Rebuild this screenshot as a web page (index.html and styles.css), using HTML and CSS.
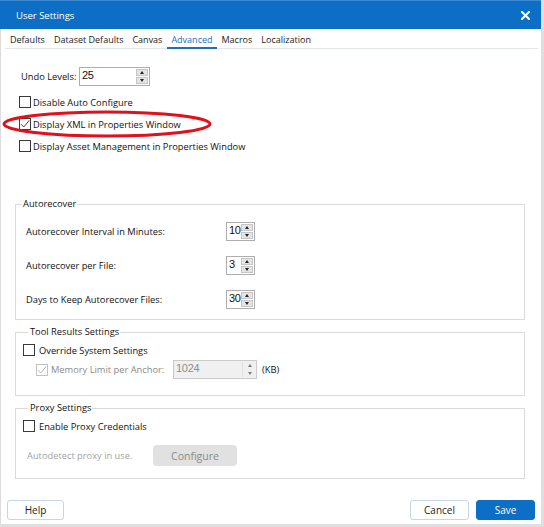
FILE: index.html
```html
<!DOCTYPE html>
<html>
<head>
<meta charset="utf-8">
<link rel="stylesheet" href="styles.css">
</head>
<body>
<div class="dialog">
  <div class="titlebar">
    <span class="title">User Settings</span>
    <svg class="close" width="9" height="9" viewBox="0 0 9 9"><path d="M1 1L8 8M8 1L1 8" stroke="#fff" stroke-width="2" stroke-linecap="square"/></svg>
  </div>
  <div class="tabs">
    <span class="tab">Defaults</span>
    <span class="tab">Dataset Defaults</span>
    <span class="tab">Canvas</span>
    <span class="tab active">Advanced</span>
    <span class="tab">Macros</span>
    <span class="tab">Localization</span>
  </div>
  <div class="content">
    <div class="undo-row">
      <span class="undo-label">Undo Levels:</span>
      <div class="spin spin-undo">
        <span class="spin-val">25</span>
        <span class="spin-btns"><span class="sb up"></span><span class="sb down"></span></span>
      </div>
    </div>
    <div class="check-row first"><span class="cb"></span><span>Disable Auto Configure</span></div>
    <div class="check-row"><span class="cb"><svg width="10" height="10" viewBox="0 0 10 10"><path d="M1 5.2L3.8 8L9.2 1.4" fill="none" stroke="#444" stroke-width="1"/></svg></span><span>Display XML in Properties Window</span></div>
    <div class="check-row"><span class="cb"></span><span>Display Asset Management in Properties Window</span></div>

    <fieldset class="group group-auto">
      <legend>Autorecover</legend>
      <div class="auto-grid">
        <span>Autorecover Interval in Minutes:</span>
        <div class="spin spin-small"><span class="spin-val">10</span><span class="spin-btns"><span class="sb up"></span><span class="sb down"></span></span></div>
        <span>Autorecover per File:</span>
        <div class="spin spin-small"><span class="spin-val">3</span><span class="spin-btns"><span class="sb up"></span><span class="sb down"></span></span></div>
        <span>Days to Keep Autorecover Files:</span>
        <div class="spin spin-small"><span class="spin-val">30</span><span class="spin-btns"><span class="sb up"></span><span class="sb down"></span></span></div>
      </div>
    </fieldset>

    <fieldset class="group group-tool">
      <legend>Tool Results Settings</legend>
      <div class="grp-row"><span class="cb"></span><span>Override System Settings</span></div>
      <div class="mem-row">
        <span class="cb cb-disabled"><svg width="10" height="10" viewBox="0 0 10 10"><path d="M1 5.2L3.8 8L9.2 1.4" fill="none" stroke="#b4b4b4" stroke-width="1"/></svg></span>
        <span class="mem-label">Memory Limit per Anchor:</span>
        <div class="spin spin-mem disabled">
          <span class="spin-val">1024</span>
          <span class="spin-btns"><span class="sb up"></span><span class="sb down"></span></span>
        </div>
        <span class="kb">(KB)</span>
      </div>
    </fieldset>

    <fieldset class="group group-proxy">
      <legend>Proxy Settings</legend>
      <div class="grp-row"><span class="cb"></span><span>Enable Proxy Credentials</span></div>
      <div class="proxy-row">
        <span class="autodetect">Autodetect proxy in use.</span>
        <span class="configure">Configure</span>
      </div>
    </fieldset>
  </div>
  <div class="footer">
    <span class="btn btn-help">Help</span>
    <span class="btn btn-cancel">Cancel</span>
    <span class="btn btn-save">Save</span>
  </div>
  <svg class="annot" width="214" height="30" viewBox="0 0 214 30"><ellipse cx="106" cy="14" rx="103" ry="12" fill="none" stroke="#e0101c" stroke-width="3"/></svg>
</div>
</body>
</html>
```
FILE: styles.css
```css
* { box-sizing: border-box; }
html, body { margin: 0; padding: 0; }
body {
  width: 544px;
  height: 527px;
  overflow: hidden;
  background: #dfdfdf;
  font-family: "Open Sans", "Noto Sans", sans-serif;
  font-size: 9.3px;
  color: #111;
}
.dialog {
  position: relative;
  width: 541px;
  height: 524px;
  background: #fff;
  display: flex;
  flex-direction: column;
  box-shadow: inset 1px 0 0 #dcdcdc;
}
.titlebar {
  height: 29px;
  flex: none;
  background: #0c6fc5;
  color: #fff;
  display: flex;
  align-items: center;
  justify-content: space-between;
  padding: 0 11px 0 16px;
  border-top: 1px solid #3d8ad0;
}
.title { font-size: 9.5px; }
.close { display: block; }

.tabs {
  flex: none;
  margin: 0 3px 0 5px;
  height: 20px;
  display: flex;
  border-bottom: 1px solid #e2e7ee;
  font-size: 9px;
}
.tab {
  padding: 4px 4.5px 0;
  line-height: 14px;
  height: 19px;
  color: #222;
}
.tab:first-child { padding-left: 5px; }
.tab.active {
  color: #1f6fc0;
  height: 20px;
  margin-bottom: -1px;
  border-bottom: 2px solid #1f6fc0;
}

.content {
  flex: 1;
  display: flex;
  flex-direction: column;
  padding: 0 16px 0 15px;
}
.undo-row {
  margin-top: 18px;
  height: 19px;
  display: flex;
  align-items: center;
  padding-left: 6px;
}
.undo-label { width: 58px; }

.check-row {
  height: 22px;
  display: flex;
  align-items: center;
  gap: 2px;
  padding-left: 4px;
}
.check-row.first { margin-top: 5px; }

.cb {
  width: 12px;
  height: 12px;
  flex: none;
  border: 1px solid #3a3a3a;
  background: #fff;
  display: flex;
  align-items: center;
  justify-content: center;
}
.cb svg { display: block; }
.cb-disabled { border-color: #c2c2c2; }

.spin {
  height: 19px;
  display: flex;
  justify-content: space-between;
  border: 1px solid #aeaeae;
  background: #fff;
  padding: 1px 1px 1px 2px;
  flex: none;
}
.spin-undo { width: 71px; }
.spin-small { width: 29px; }
.spin-mem { width: 84px; }
.spin-val {
  font-family: "Liberation Sans", Arial, sans-serif;
  font-size: 11px;
  line-height: 12px;
  color: #111;
  letter-spacing: -0.3px;
}
.spin-btns {
  width: 12px;
  display: flex;
  flex-direction: column;
  gap: 1px;
}
.sb {
  flex: 1;
  background: #e4e4e4;
  border: 1px solid #c6c6c6;
  display: flex;
  align-items: center;
  justify-content: center;
}
.sb::after {
  content: "";
  width: 0;
  height: 0;
  border-left: 2.5px solid transparent;
  border-right: 2.5px solid transparent;
}
.sb.up::after { border-bottom: 3px solid #222; }
.sb.down::after { border-top: 3px solid #222; }

.spin.disabled {
  background: #f0f0f0;
  border-color: #cbcbcb;
}
.spin.disabled .spin-val { color: #8e8e8e; }
.spin.disabled .spin-btns { width: 13px; padding-left: 1px; border-left: 1px solid #e2e2e2; }
.spin.disabled .sb { background: transparent; border: none; }
.spin.disabled .sb.up::after { border-bottom-color: #7c7c7c; }
.spin.disabled .sb.down::after { border-top-color: #7c7c7c; }

.group {
  margin: 5px 0 0;
  padding: 0;
  border: 1px solid #dadada;
  min-width: 0;
}
.group legend {
  margin-left: 5px;
  padding: 0 1px 0 2px;
  line-height: 14px;
}
.group-auto { margin-top: 40px; }
.auto-grid {
  display: grid;
  grid-template-columns: 200px 29px;
  row-gap: 15px;
  align-items: center;
  padding: 11px 0 10px 10px;
}
.group-tool { padding: 2px 0 16px 7px; }
.group-proxy { padding: 2px 0 12px 7px; }
.grp-row {
  height: 18px;
  display: flex;
  align-items: center;
  gap: 4px;
}
.mem-row {
  margin-top: 1px;
  height: 19px;
  display: flex;
  align-items: center;
  padding-left: 13px;
}
.mem-row .cb { margin-right: 3px; }
.mem-label { width: 122px; color: #8a8a8a; }
.kb { margin-left: 5px; }
.proxy-row {
  margin-top: 10px;
  display: flex;
  align-items: center;
  padding-left: 4px;
}
.autodetect { width: 126px; color: #a3a3a3; }
.configure {
  width: 84px;
  height: 21px;
  border-radius: 4px;
  background: #e1e1e1;
  color: #8a8a8a;
  font-size: 10.5px;
  display: flex;
  align-items: center;
  justify-content: center;
}

.footer {
  flex: none;
  display: flex;
  padding: 0 6px 4px 7px;
}
.btn {
  height: 20px;
  border: 1px solid #c8d5e6;
  border-radius: 3px;
  background: #fff;
  font-size: 10px;
  display: flex;
  align-items: center;
  justify-content: center;
  color: #1b1b1b;
}
.btn-help { width: 57px; }
.btn-cancel { width: 59px; margin-left: auto; }
.btn-save {
  width: 59px;
  margin-left: 7px;
  background: #0c6fc5;
  border-color: #0c6fc5;
  color: #fff;
}
.annot {
  position: absolute;
  left: 1px;
  top: 110px;
  pointer-events: none;
}
```
